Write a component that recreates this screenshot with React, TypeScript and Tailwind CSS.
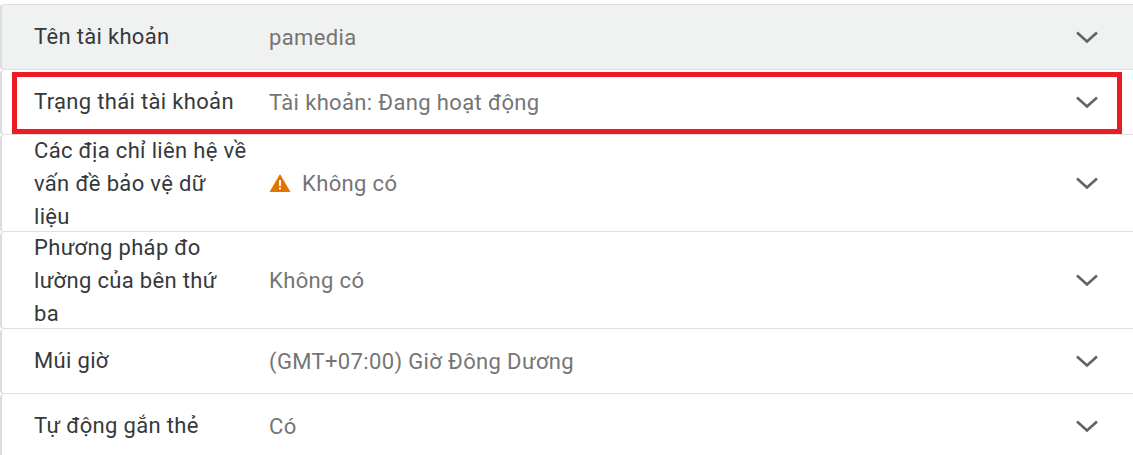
import React from "react";

const Chevron = () => (
  <svg width="24" height="14" viewBox="0 0 24 14" fill="none" className="shrink-0">
    <path d="M2 2.5 L12 11.5 L22 2.5" stroke="#5f6368" strokeWidth="2.6" />
  </svg>
);

const Warn = () => (
  <svg width="22" height="20" viewBox="0 0 22 20" className="shrink-0 mr-[11px]">
    <path d="M11 1 L21.5 19 H0.5 Z" fill="#e37400" />
    <rect x="10" y="7" width="2" height="6" fill="#fff" />
    <rect x="10" y="14.4" width="2" height="2" fill="#fff" />
  </svg>
);

type RowProps = { label: React.ReactNode; value: string; warn?: boolean; h: string; bg?: string; single?: boolean };

const Row = ({ label, value, warn, h, bg = "bg-white", single }: RowProps) => (
  <div className={`flex items-center pl-[32px] pr-[34px] border-b border-[#e0e0e0] border-l-2 border-l-[#dadce0] rounded-l-[4px] ${h} ${bg}`}>
    <div className={`w-[235px] shrink-0 text-[22px] leading-[33px] tracking-[0.33px] text-[#35393c] [font-family:Roboto,sans-serif] ${single ? "pb-[2px]" : ""}`}>{label}</div>
    <div className="flex-1 flex items-center text-[22px] tracking-[0.36px] text-[#757575] [font-family:Roboto,sans-serif]">
      {warn && <Warn />}
      {value}
    </div>
    <Chevron />
  </div>
);

export default function App() {
  return (
    <div className="relative w-[1133px] h-[455px] overflow-hidden bg-white">
      <div className="flex flex-col pt-[4px]">
        <Row single label="Tên tài khoản" value="pamedia" h="h-[66px] border-t border-t-[#e0e0e0]" bg="bg-[#f0f1f1]" />
        <Row single label="Trạng thái tài khoản" value="Tài khoản: Đang hoạt động" h="h-[65px]" />
        <Row label={<>Các địa chỉ liên hệ về<br />vấn đề bảo vệ dữ<br />liệu</>} value="Không có" warn h="h-[97px]" />
        <Row label={<>Phương pháp đo<br />lường của bên thứ<br />ba</>} value="Không có" h="h-[97px]" />
        <Row single label="Múi giờ" value="(GMT+07:00) Giờ Đông Dương" h="h-[65px]" />
        <Row single label="Tự động gắn thẻ" value="Có" h="h-[65px]" />
      </div>
      <div className="absolute left-[12px] top-[72px] w-[1110px] h-[62px] border-[5px] border-[#ed1c24]" />
    </div>
  );
}
